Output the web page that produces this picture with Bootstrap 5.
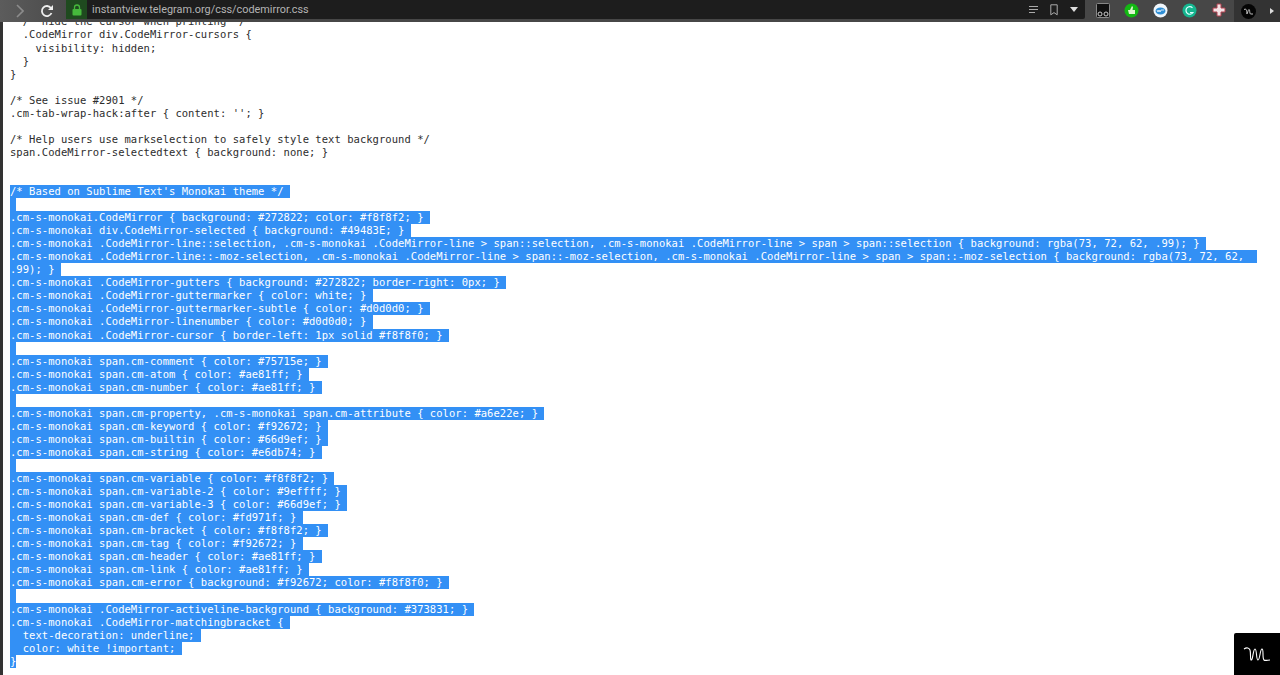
<!DOCTYPE html>
<html lang="en">
<head>
<meta charset="utf-8">
<title>codemirror.css</title>
<link href="https://cdn.jsdelivr.net/npm/bootstrap@5.3.0/dist/css/bootstrap.min.css" rel="stylesheet">
<style>
html,body{height:675px;overflow:hidden;background:#fff}
.chrome-bar{height:22px;background:#474747;font-family:"Roboto",sans-serif;flex:none}
.chrome-nav{width:66px;height:22px;background:linear-gradient(90deg,#5c5c5c,#4a4a4a);flex:none}
.chrome-url{background:#1d1d1d;height:19px;color:#b4b4b4;font-size:10.86px;line-height:19px;min-width:0;border-bottom-right-radius:2px}
.url-lock{width:21px;height:19px;background:#1f4a1f;flex:none}
.url-text{padding-left:5px}
.url-actions{gap:12px;padding-right:7px}
.chrome-exts{width:149px;flex:none;padding-left:3px;height:20px}
.ext-slot{width:29px;height:18px}
.chrome-end{background:#333;width:46px;height:22px;padding-left:7px;flex:none}
.chrome-more{border-left:4px solid #ddd;border-top:3px solid transparent;border-bottom:3px solid transparent;margin-left:14px}
.page-strip{width:3px;background:#333;flex:none}
.page-main{height:653px;overflow:hidden}
.code-sheet{margin:-6.6px 0 0 7px;padding:0;font-family:"DejaVu Sans Mono",monospace;font-size:10.5px;letter-spacing:.04px;line-height:13.05px;color:#2d2d2d;overflow:visible;white-space:pre}
.code-row{height:13.05px}
.sel-run{background:#3390f5;color:#fff;display:inline-block;height:13.05px}
.mark-tile{position:absolute;right:0;bottom:0;width:46px;height:42px;background:#000;border-top-left-radius:2px}
</style>
</head>
<body class="m-0 position-relative">
<header class="chrome-bar d-flex">
  <div class="chrome-nav d-flex align-items-center">
    <svg class="ms-3" width="8" height="14" viewBox="0 0 8 14"><path d="M1 1l6 6-6 6" fill="none" stroke="#8c8c8c" stroke-width="1.6"/></svg>
    <svg class="ms-3" width="14" height="14" viewBox="0 0 14 14"><path d="M11.500 9a5 5 0 1 1 -.6-5" fill="none" stroke="#eee" stroke-width="1.800"/><path d="M13 1v5H8z" fill="#eee"/></svg>
  </div>
  <div class="chrome-url d-flex flex-grow-1 align-items-center">
    <div class="url-lock d-flex align-items-center justify-content-center">
      <svg width="10" height="12" viewBox="0 0 10 12"><path d="M2.500 5V3.500a2.500 2.500 0 0 1 5 0V5" fill="none" stroke="#46b83c" stroke-width="1.300"/><rect x="0.500" y="5" width="9" height="6.500" rx="1" fill="#46b83c"/></svg>
    </div>
    <div class="url-text flex-grow-1">instantview.telegram.org/css/codemirror.css</div>
    <div class="url-actions d-flex align-items-center">
      <svg width="9" height="7" viewBox="0 0 9 7"><path d="M0 .5h9M0 3.500h9M0 6.500h6" stroke="#aaa" stroke-width="1.100"/></svg>
      <svg width="8" height="12" viewBox="0 0 8 12"><path d="M.8.800h6.400v10L4 8.600.8 10.800z" fill="none" stroke="#aaa" stroke-width="1"/></svg>
      <svg width="8" height="5" viewBox="0 0 8 5"><path d="M0 0h8L4 5z" fill="#ddd"/></svg>
    </div>
  </div>
  <div class="chrome-exts d-flex align-items-center">
    <span class="ext-slot d-flex align-items-center justify-content-center"><svg width="14" height="15" viewBox="0 0 14 15"><rect x=".5" y=".5" width="13" height="14" rx="1" fill="#111" stroke="#888"/><circle cx="4" cy="11" r="2" fill="none" stroke="#ccc"/><circle cx="10" cy="11" r="2" fill="none" stroke="#ccc"/></svg></span>
    <span class="ext-slot d-flex align-items-center justify-content-center"><svg width="15" height="15" viewBox="0 0 15 15"><circle cx="7.500" cy="7.500" r="7" fill="#13b813"/><path d="M4 7h2l2-4 1 1-.5 3H11v4H5z" fill="#dff5d0"/></svg></span>
    <span class="ext-slot d-flex align-items-center justify-content-center"><svg width="15" height="15" viewBox="0 0 15 15"><circle cx="7.500" cy="7.500" r="7" fill="#f0f6fb"/><ellipse cx="7.500" cy="8" rx="5" ry="3.500" fill="#2f8fd6"/><path d="M4 7l1 2 1-2 1 2 1-2h3" fill="none" stroke="#fff" stroke-width=".8"/></svg></span>
    <span class="ext-slot d-flex align-items-center justify-content-center"><svg width="15" height="15" viewBox="0 0 15 15"><circle cx="7.500" cy="7.500" r="7" fill="#15b58f"/><path d="M10.500 4.800A3.800 3.800 0 1 0 11 9.500H8" fill="none" stroke="#dff" stroke-width="1.200"/></svg></span>
    <span class="ext-slot d-flex align-items-center justify-content-center"><svg width="14" height="14" viewBox="0 0 14 14"><path d="M5 1h4v4h4v4H9v4H5V9H1V5h4z" fill="#f4e3e6" stroke="#b0404f"/></svg></span>
  </div>
  <div class="chrome-end d-flex align-items-center">
    <svg width="15" height="15" viewBox="0 0 15 15"><circle cx="7.500" cy="7.500" r="7.500" fill="#050505"/><path d="M3 5.500c2-1 2 0 2.500 1s0 3.500.5 3.500 1-4.500 2-4.500.5 4.500 1.500 4.500h2.500" fill="none" stroke="#eee" stroke-width=".8"/></svg>
    <span class="chrome-more"></span>
  </div>
</header>
<main class="page-main d-flex">
  <div class="page-strip"></div>
  <pre class="code-sheet" id="code"></pre>
</main>
<div class="mark-tile d-flex align-items-center justify-content-center">
  <svg width="28" height="18" viewBox="0 0 28 18"><path d="M1 4c3-2 5-1 6 1 1 3 0 9 1 10 2 1 2-11 4-11s1 11 3 11 2-11 4-11 0 9 2 11c1 1 4 0 6 0" fill="none" stroke="#fff" stroke-width="1.100"/></svg>
</div>
<script>
const plain=`  /* hide the cursor when printing */
  .CodeMirror div.CodeMirror-cursors {
    visibility: hidden;
  }
}

/* See issue #2901 */
.cm-tab-wrap-hack:after { content: ''; }

/* Help users use markselection to safely style text background */
span.CodeMirror-selectedtext { background: none; }

`;
const sel=`/* Based on Sublime Text's Monokai theme */

.cm-s-monokai.CodeMirror { background: #272822; color: #f8f8f2; }
.cm-s-monokai div.CodeMirror-selected { background: #49483E; }
.cm-s-monokai .CodeMirror-line::selection, .cm-s-monokai .CodeMirror-line > span::selection, .cm-s-monokai .CodeMirror-line > span > span::selection { background: rgba(73, 72, 62, .99); }
.cm-s-monokai .CodeMirror-line::-moz-selection, .cm-s-monokai .CodeMirror-line > span::-moz-selection, .cm-s-monokai .CodeMirror-line > span > span::-moz-selection { background: rgba(73, 72, 62, 
.99); }
.cm-s-monokai .CodeMirror-gutters { background: #272822; border-right: 0px; }
.cm-s-monokai .CodeMirror-guttermarker { color: white; }
.cm-s-monokai .CodeMirror-guttermarker-subtle { color: #d0d0d0; }
.cm-s-monokai .CodeMirror-linenumber { color: #d0d0d0; }
.cm-s-monokai .CodeMirror-cursor { border-left: 1px solid #f8f8f0; }

.cm-s-monokai span.cm-comment { color: #75715e; }
.cm-s-monokai span.cm-atom { color: #ae81ff; }
.cm-s-monokai span.cm-number { color: #ae81ff; }

.cm-s-monokai span.cm-property, .cm-s-monokai span.cm-attribute { color: #a6e22e; }
.cm-s-monokai span.cm-keyword { color: #f92672; }
.cm-s-monokai span.cm-builtin { color: #66d9ef; }
.cm-s-monokai span.cm-string { color: #e6db74; }

.cm-s-monokai span.cm-variable { color: #f8f8f2; }
.cm-s-monokai span.cm-variable-2 { color: #9effff; }
.cm-s-monokai span.cm-variable-3 { color: #66d9ef; }
.cm-s-monokai span.cm-def { color: #fd971f; }
.cm-s-monokai span.cm-bracket { color: #f8f8f2; }
.cm-s-monokai span.cm-tag { color: #f92672; }
.cm-s-monokai span.cm-header { color: #ae81ff; }
.cm-s-monokai span.cm-link { color: #ae81ff; }
.cm-s-monokai span.cm-error { background: #f92672; color: #f8f8f0; }

.cm-s-monokai .CodeMirror-activeline-background { background: #373831; }
.cm-s-monokai .CodeMirror-matchingbracket {
  text-decoration: underline;
  color: white !important;
}`;
const host=document.getElementById('code');
function add(t,isSel,last){const r=document.createElement('div');r.className='code-row';
 if(isSel){const s=document.createElement('span');s.className='sel-run';s.textContent=last?t:t+' ';r.appendChild(s);}else{r.textContent=t||' ';}
 host.appendChild(r);}
plain.split('\n').forEach(l=>add(l,false,false));
const sl=sel.split('\n');sl.forEach((l,i)=>add(l,true,i==sl.length-1));
</script>
<script src="https://cdn.jsdelivr.net/npm/bootstrap@5.3.0/dist/js/bootstrap.bundle.min.js"></script>
</body>
</html>
